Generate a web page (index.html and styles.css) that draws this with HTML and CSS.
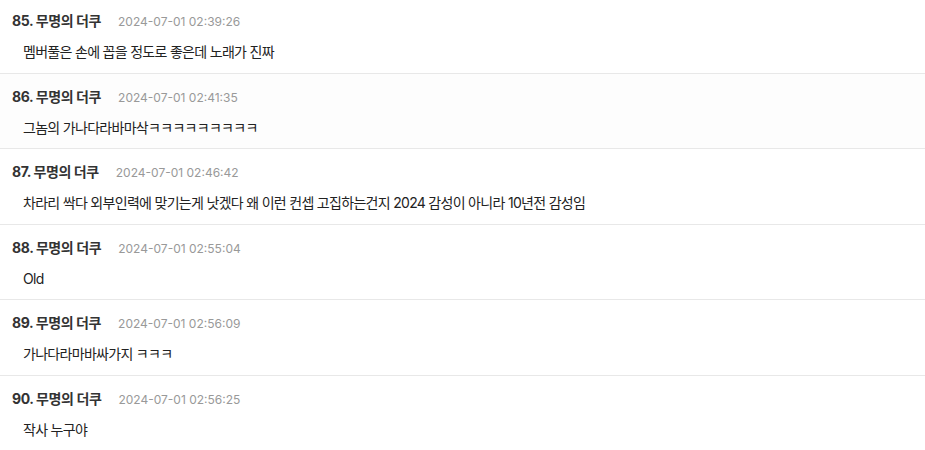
FILE: index.html
```html
<!DOCTYPE html>
<html lang="ko">

<head>
    <meta charset="UTF-8">
    <meta name="viewport" content="width=device-width, initial-scale=1.0">
    <title>댓글</title>
    <link rel="stylesheet" href="styles.css">
</head>

<body>
    <ul class="cmtlist">
        <li class="cmt">
            <div class="cmthead"><span class="nick">85. 무명의 더쿠</span><span class="date">2024-07-01 02:39:26</span></div>
            <p class="cmtbody">멤버풀은 손에 꼽을 정도로 좋은데 노래가 진짜</p>
        </li>
        <li class="cmt alt">
            <div class="cmthead"><span class="nick">86. 무명의 더쿠</span><span class="date">2024-07-01 02:41:35</span></div>
            <p class="cmtbody">그놈의 가나다라바마삭ㅋㅋㅋㅋㅋㅋㅋㅋㅋ</p>
        </li>
        <li class="cmt">
            <div class="cmthead"><span class="nick">87. 무명의 더쿠</span><span class="date">2024-07-01 02:46:42</span></div>
            <p class="cmtbody">차라리 싹다 외부인력에 맞기는게 낫겠다 왜 이런 컨셉 고집하는건지 2024 감성이 아니라 10년전 감성임</p>
        </li>
        <li class="cmt">
            <div class="cmthead"><span class="nick">88. 무명의 더쿠</span><span class="date">2024-07-01 02:55:04</span></div>
            <p class="cmtbody">Old</p>
        </li>
        <li class="cmt">
            <div class="cmthead"><span class="nick">89. 무명의 더쿠</span><span class="date">2024-07-01 02:56:09</span></div>
            <p class="cmtbody">가나다라마바싸가지 ㅋㅋㅋ</p>
        </li>
        <li class="cmt">
            <div class="cmthead"><span class="nick">90. 무명의 더쿠</span><span class="date">2024-07-01 02:56:25</span></div>
            <p class="cmtbody">작사 누구야</p>
        </li>
    </ul>
</body>

</html>
```

FILE: styles.css
```css
body {
    margin: 0;
    background: #fff;
    font-family: Inter, "Noto Sans CJK KR", sans-serif;
    color: #222;
}

.cmtlist {
    list-style: none;
    margin: -2px 0 0 0;
    padding: 0;
}

.cmt {
    height: 75.5px;
    box-sizing: border-box;
    padding: 13px 12px 0 12px;
    border-bottom: 1px solid #e8e8e8;
}

.alt {
    background: #fdfdfd;
}

.cmthead {
    display: flex;
    align-items: baseline;
    gap: 17px;
    height: 20px;
    line-height: 20px;
}

.nick {
    font-size: 14px;
    font-weight: bold;
    letter-spacing: -0.4px;
    color: #333;
}

.date {
    font-size: 12px;
    color: #999;
}

.cmtbody {
    margin: 11px 0 0 11px;
    font-size: 14px;
    letter-spacing: -0.7px;
    line-height: 20px;
    color: #222;
}
```
